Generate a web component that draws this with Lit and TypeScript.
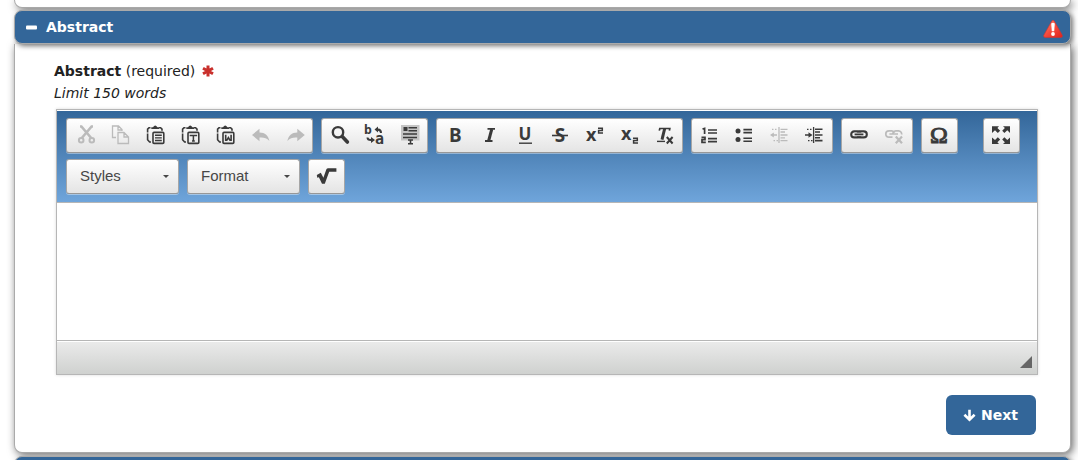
import { LitElement, html, svg, css, nothing, TemplateResult, SVGTemplateResult } from "lit";
import { customElement, property } from "lit/decorators.js";

interface Tool {
  name: string;
  disabled?: boolean;
}

const clipboard = svg`
  <path d="M5.5 2.8H4L2.6 4.2V7.5M2.6 8.5V14.8L4.6 17H6M14 2.8H15.6L17 4.2V5.8" fill="none" stroke="currentColor" stroke-width="1.6"/>
  <path d="M6.3 4V2.2H8Q10.2-1 12.4 2.2H14V4Z" fill="currentColor"/>
  <rect x="8" y="7.4" width="10.8" height="11" rx="1" fill="none" stroke="currentColor" stroke-width="1.6"/>`;

const icons: Record<string, SVGTemplateResult> = {
  Cut: svg`
    <path d="M5 1.5H6.4L16.2 13M18 1.5H16.6L6.8 13" stroke="currentColor" stroke-width="2.6" fill="none"/>
    <circle cx="6.2" cy="15.2" r="2.3" fill="none" stroke="currentColor" stroke-width="2"/>
    <circle cx="16.8" cy="15.2" r="2.3" fill="none" stroke="currentColor" stroke-width="2"/>`,
  Copy: svg`
    <path d="M6 12.5H2.5V1H8.5L12 4.5V6M8 1V5H12" fill="none" stroke="currentColor" stroke-width="1.3"/>
    <path d="M8 7.5H14L18.5 12V18.5H8ZM14 7.5V12H18.5" fill="none" stroke="currentColor" stroke-width="1.3"/>`,
  Paste: svg`${clipboard}
    <path d="M10 10.3H16.8M10 12.9H16.8M10 15.5H16.8" stroke="currentColor" stroke-width="1.4"/>`,
  "Paste as plain text": svg`${clipboard}
    <path d="M10.4 11.3V10.4H16.4V11.3M13.4 10.4V16M12 16H14.8" stroke="currentColor" stroke-width="1.5" fill="none"/>`,
  "Paste from Word": svg`${clipboard}
    <path d="M10.7 9.8V15.3H11.8L13.4 12.6L15 15.3H16.1V9.8" stroke="currentColor" stroke-width="1.6" fill="none"/>`,
  Undo: svg`<path d="M2 10 L9.5 3.8V7.4C15 7.4 18.5 10.5 19.4 16C16.5 12.9 13.5 12.3 9.5 12.6V16.2Z" fill="currentColor"/>`,
  Redo: svg`<path d="M19.8 10 L12.3 3.8V7.4C6.8 7.4 3.3 10.5 2.4 16C5.3 12.9 8.3 12.3 12.3 12.6V16.2Z" fill="currentColor"/>`,
  Find: svg`
    <circle cx="8" cy="7.3" r="5.2" fill="none" stroke="currentColor" stroke-width="2.4"/>
    <path d="M12.2 11.5L17.4 17" stroke="currentColor" stroke-width="3.6" stroke-linecap="round"/>`,
  Replace: svg`
    <text x="-1" y="9" class="mono" font-size="13">b</text>
    <text x="10" y="19" class="mono" font-size="15">a</text>
    <path d="M9.5 4.5L13 1.5V3.6Q17 3.8 17 8H15Q15 6 13 5.8V7.5ZM1.5 12.5H3.4Q3.6 14 6 14V12L10 15L6 18V16Q1.5 16 1.5 12.5Z" fill="currentColor"/>`,
  "Select all": svg`
    <path d="M1 0H19.5V15.5H1Z" fill="#c4c4c4"/>
    <path d="M3.5 2H7.5V6H3.5Z" fill="currentColor"/>
    <path d="M8.5 2.8H17M8.5 5.8H17M3 8.9H17M3 12.4H17" stroke="currentColor" stroke-width="1.5"/>
    <path d="M8 15H13M10.5 15V18.5M8 18.8H13" stroke="currentColor" stroke-width="1.6"/>`,
  Bold: svg`<text x="4" y="17" class="sans" font-size="19">B</text>`,
  Italic: svg`<path d="M7.5 3.9H15M5 16H12.5" fill="none" stroke="currentColor" stroke-width="1.8"/><path d="M11.8 4L8.6 16" stroke="currentColor" stroke-width="3"/>`,
  Underline: svg`
    <text x="10" y="15" class="sans" font-size="17" text-anchor="middle">U</text>
    <path d="M4 18.2H17" stroke="currentColor" stroke-width="1.4"/>`,
  Strikethrough: svg`
    <text x="10" y="17" class="sans" font-size="19" text-anchor="middle">S</text>
    <path d="M2 10.5H18" stroke="currentColor" stroke-width="1.6"/>`,
  Superscript: svg`
    <text x="1" y="16" class="sans" font-size="18">x</text>
    <path d="M13 3.3H17.3V5.5H13.6V8H18" fill="none" stroke="currentColor" stroke-width="1.5"/>`,
  Subscript: svg`
    <text x="1" y="15" class="sans" font-size="18">x</text>
    <path d="M13 13.3H17.3V15.5H13.6V18H18" fill="none" stroke="currentColor" stroke-width="1.5"/>`,
  "Remove format": svg`
    <path d="M4.3 5.6L4.8 3.5H14.8L14.4 5.6" stroke="currentColor" stroke-width="1.7" fill="none"/>
    <path d="M9.7 3.5L7 14.6" stroke="currentColor" stroke-width="3"/>
    <path d="M2 16.4H10" stroke="currentColor" stroke-width="1.4"/>
    <path d="M11.8 12L17.6 18.5M17.6 12L11.8 18.5" stroke="currentColor" stroke-width="2"/>`,
  "Numbered list": svg`
    <path d="M2.5 4L4.6 3.4V9M1.5 12.4H5V14.6H2V17.3H5.8" stroke="currentColor" stroke-width="1.7" fill="none"/>
    <path d="M8 5H17M8 8H17M8 13.6H17M8 16.6H17" stroke="currentColor" stroke-width="1.6"/>`,
  "Bulleted list": svg`
    <circle cx="3" cy="6" r="2.5" fill="currentColor"/><circle cx="3" cy="14.6" r="2.5" fill="currentColor"/>
    <path d="M8.4 4.6H17M8.4 7.6H17M8.4 13.2H17M8.4 16.2H17" stroke="currentColor" stroke-width="1.6"/>`,
  "Decrease indent": svg`
    <path d="M9 2V18" stroke="currentColor" stroke-width="1.3"/>
    <path d="M2 4.3H8M3.5 15.6H8" stroke="currentColor" stroke-width="1.2" stroke-dasharray="1.5 1.5"/>
    <path d="M10.5 4.3H17.5M10.5 7H15M10.5 10H17.5M10.5 12.8H15M10.5 15.6H17.5M2 10H7" stroke="currentColor" stroke-width="1.3"/>
    <path d="M0 10L3.8 7.5V12.5Z" fill="currentColor"/>`,
  "Increase indent": svg`
    <path d="M8.6 2V18" stroke="currentColor" stroke-width="1.3"/>
    <path d="M2 4.3H7.5M3 15.6H7.5" stroke="currentColor" stroke-width="1.2" stroke-dasharray="1.5 1.5"/>
    <path d="M10 4.3H17.5M10 7H15M10 10H17.5M10 12.8H15M10 15.6H17.5M0 10H5" stroke="currentColor" stroke-width="1.6"/>
    <path d="M7.5 10L3.5 7.2V12.8Z" fill="currentColor"/>`,
  Link: svg`
    <rect x="1.2" y="6.4" width="9.4" height="6" rx="3" fill="none" stroke="currentColor" stroke-width="2.1"/>
    <rect x="7.4" y="6.4" width="9.4" height="6" rx="3" fill="none" stroke="currentColor" stroke-width="2.1"/>
    <path d="M4.4 9.4H13.6" stroke="#eee" stroke-width="3.4"/><path d="M4.6 9.4H13.4" stroke="currentColor" stroke-width="1.8"/>`,
  Unlink: svg`
    <path d="M7.5 12.2H4A3.2 3.2 0 0 1 4 5.8H6.8A3 3 0 0 1 9.5 7.8M7.8 9.6A3.2 3.2 0 0 1 10.8 5.8H13.6A3.2 3.2 0 0 1 16.6 9.5M4.4 9H13" fill="none" stroke="currentColor" stroke-width="1.7"/>
    <path d="M10.8 11.5L17 18.3M17 11.5L10.8 18.3" stroke="currentColor" stroke-width="2.2"/>`,
  "Special character": svg`<text x="9" y="18" class="serif" font-size="24" text-anchor="middle">Ω</text>`,
  Maximize: svg`
    <path d="M0 1.2H7L5.4 2.9L8.2 5.7L5.8 8L3 5.3L0 8ZM18 1.2V8L15.3 5.3L12.4 8L10.2 5.7L12.9 2.9L11 1.2ZM0 19V12.4L3 14.9L5.8 12.2L8.2 14.5L5.4 17.3L7 19ZM18 19H11L12.9 17.3L10.2 14.5L12.4 12.2L15.3 14.9L18 12.4Z" fill="currentColor"/>`,
  Equation: svg`<path d="M-.2 9L3.8 6.8L6.4 11.7L9.3 3.5Q9.8 2.2 11.2 2.2H19.4V5.8H12.2L7.8 17.8H5L1.9 11.2L.3 11.8Z" fill="currentColor"/>`,
};

const groups: Tool[][] = [
  [
    { name: "Cut", disabled: true },
    { name: "Copy", disabled: true },
    { name: "Paste" },
    { name: "Paste as plain text" },
    { name: "Paste from Word" },
    { name: "Undo", disabled: true },
    { name: "Redo", disabled: true },
  ],
  [{ name: "Find" }, { name: "Replace" }, { name: "Select all" }],
  [
    { name: "Bold" },
    { name: "Italic" },
    { name: "Underline" },
    { name: "Strikethrough" },
    { name: "Superscript" },
    { name: "Subscript" },
    { name: "Remove format" },
  ],
  [
    { name: "Numbered list" },
    { name: "Bulleted list" },
    { name: "Decrease indent", disabled: true },
    { name: "Increase indent" },
  ],
  [{ name: "Link" }, { name: "Unlink", disabled: true }],
  [{ name: "Special character" }],
];

@customElement("rich-editor")
class RichEditor extends LitElement {
  @property() label = "";

  static styles = css`
    :host {
      display: block;
      border: 1px solid #b6b6b6;
      box-shadow: 0 0 3px rgba(0, 0, 0, 0.15);
      font-family: "Liberation Sans", Arial, sans-serif;
    }
    .toolbar {
      display: flex;
      flex-direction: column;
      gap: 6px;
      padding: 7px 9px 8px;
      margin-top: 1px;
      border-bottom: 1px solid #b6b6b6;
      background: linear-gradient(#336699, #6fa5db);
    }
    .row {
      display: flex;
      gap: 8px;
    }
    .group {
      display: flex;
      box-sizing: border-box;
      height: 35px;
      border: 1px solid #a6a6a6;
      border-bottom-color: #979797;
      border-radius: 3px;
      background: linear-gradient(#ffffff, #e4e4e4);
      box-shadow: 0 1px 0 rgba(255, 255, 255, 0.4);
    }
    .apart {
      margin-left: 17px;
    }
    .tool {
      display: block;
      padding: 6px 7px 7px 8px;
      border: 0;
      background: none;
      color: #3a3a3a;
    }
    .tool:disabled {
      color: #bbb;
    }
    svg {
      display: block;
      overflow: visible;
    }
    text {
      fill: currentColor;
      font-weight: bold;
    }
    .sans {
      font-family: "Noto Sans", sans-serif;
    }
    .mono {
      font-family: "DejaVu Sans Mono", monospace;
    }
    .serif {
      font-family: "Liberation Serif", serif;
      font-weight: normal;
      stroke: currentColor;
      stroke-width: 1px;
    }
    .combo {
      display: grid;
      width: 113px;
      align-items: center;
    }
    .combo > * {
      grid-area: 1 / 1;
    }
    .combo select {
      appearance: none;
      width: 100%;
      height: 33px;
      padding: 0 24px 2px 13px;
      border: 0;
      background: none;
      color: #474747;
      font: 15px "Liberation Sans", Arial, sans-serif;
    }
    .arrow {
      justify-self: end;
      margin-right: 9px;
      border: 3px solid transparent;
      border-top-color: #474747;
      border-bottom: 0;
      pointer-events: none;
    }
    textarea {
      display: block;
      box-sizing: border-box;
      width: 100%;
      height: 137px;
      padding: 12px;
      border: 0;
      outline: 0;
      resize: none;
      background: #fff;
      font: 14px "Liberation Sans", Arial, sans-serif;
    }
    .footer {
      display: flex;
      justify-content: flex-end;
      align-items: flex-end;
      box-sizing: border-box;
      height: 34px;
      padding: 0 5px 6px;
      border-top: 1px solid #b6b6b6;
      box-shadow: inset 0 1px 0 #fff;
      background: linear-gradient(#ebebeb, #cfd1cf);
    }
    .grip {
      border: 6px solid transparent;
      border-right-color: #666;
      border-bottom-color: #666;
    }
  `;

  private tool(t: Tool): TemplateResult {
    return html`<button class="tool" type="button" aria-label=${t.name} ?disabled=${t.disabled}>
      <svg width="20" height="20" viewBox="0 0 20 20" aria-hidden="true">${icons[t.name] ?? nothing}</svg>
    </button>`;
  }

  private combo(name: string): TemplateResult {
    return html`<div class="group combo">
      <select aria-label=${name}><option>${name}</option></select>
      <span class="arrow"></span>
    </div>`;
  }

  render() {
    return html`
      <div class="toolbar" role="toolbar">
        <div class="row">
          ${groups.map((g) => html`<div class="group">${g.map((t) => this.tool(t))}</div>`)}
          <div class="group apart">${this.tool({ name: "Maximize" })}</div>
        </div>
        <div class="row">
          ${this.combo("Styles")} ${this.combo("Format")}
          <div class="group">${this.tool({ name: "Equation" })}</div>
        </div>
      </div>
      <textarea aria-label=${this.label}></textarea>
      <div class="footer"><span class="grip"></span></div>
    `;
  }
}

@customElement("app-root")
class AppRoot extends LitElement {
  static styles = css`
    :host {
      display: block;
      box-sizing: border-box;
      height: 100vh;
      overflow: hidden;
      padding: 0 7px 0 14px;
      background: #fff;
      color: #222;
      font: 14px/22px Verdana, "DejaVu Sans", sans-serif;
    }
    .panel {
      border: 1px solid #aaa;
      border-top: 0;
      border-radius: 0 0 8px 8px;
      background: #fff;
      box-shadow: 2px 2px 8px #666;
    }
    .previous {
      height: 7px;
    }
    .bar {
      position: relative;
      display: flex;
      align-items: center;
      box-sizing: border-box;
      width: 100%;
      height: 34px;
      margin-top: 2px;
      padding: 0 7px 0 11px;
      border: 1px solid #aaa;
      border-radius: 8px;
      background: #336699;
      box-shadow: 2px 2px 5px #777;
      color: #fff;
      font: bold 14px/22px Verdana, "DejaVu Sans", sans-serif;
    }
    .bar span {
      flex: 1;
      margin-left: 9px;
      text-align: left;
    }
    .warning {
      margin-top: 4px;
    }
    .following {
      margin-top: 3px;
    }
    .body {
      padding: 16px 32px 17px 39px;
    }
    .label {
      display: flex;
      align-items: center;
      gap: 7px;
    }
    .hint {
      font-style: italic;
    }
    rich-editor {
      margin: 5px 0 0 2px;
    }
    .actions {
      display: flex;
      justify-content: flex-end;
      margin: 20px 2px 0 0;
    }
    .next {
      display: flex;
      align-items: center;
      gap: 5px;
      height: 40px;
      padding: 0 18px 0 17px;
      border: 0;
      border-radius: 6px;
      background: #336699;
      color: #fff;
      font: bold 14px/22px Verdana, "DejaVu Sans", sans-serif;
    }
  `;

  render() {
    return html`
      <div class="panel previous"></div>
      <button class="bar" type="button" aria-expanded="true">
        <svg width="11" height="12" viewBox="0 0 11 12" aria-hidden="true">
          <rect y="4.5" width="11" height="4" rx="1" fill="#fff" />
        </svg>
        <span>Abstract</span>
        <svg class="warning" width="20" height="18" viewBox="0 0 20 18" aria-hidden="true">
          <defs>
            <linearGradient id="alert" x1="0" y1="0" x2="1" y2="1">
              <stop offset="0" stop-color="#ff8a70" />
              <stop offset=".5" stop-color="#f5493c" />
              <stop offset="1" stop-color="#e0221c" />
            </linearGradient>
          </defs>
          <path d="M8.8 1Q10 -.6 11.2 1L19.2 15.2Q19.8 17.2 18 17.4H2Q.2 17.2 .8 15.2Z" fill="url(#alert)" stroke="#d8322a" stroke-width=".6" />
          <path d="M8.2 3.4Q10 2 11.8 3.4L11.2 11.2H8.8Z" fill="#fff" />
          <circle cx="10" cy="14" r="1.9" fill="#fff" />
        </svg>
      </button>
      <section class="panel body">
        <div class="label">
          <span><b>Abstract</b> (required)</span>
          <svg width="12" height="12" viewBox="0 0 12 12" aria-hidden="true">
            <path d="M6 .5V11.5M1 3.2L11 8.8M11 3.2L1 8.8" stroke="#c9302c" stroke-width="3" />
          </svg>
        </div>
        <div class="hint">Limit 150 words</div>
        <rich-editor label="Abstract"></rich-editor>
        <div class="actions">
          <button class="next" type="button">
            <svg width="13" height="13" viewBox="0 0 13 13" aria-hidden="true">
              <path d="M6.5 .8V10M1.4 5.8L6.5 10.8L11.6 5.8" fill="none" stroke="#fff" stroke-width="2.6" />
            </svg>
            Next
          </button>
        </div>
      </section>
      <div class="bar following"></div>
    `;
  }
}
